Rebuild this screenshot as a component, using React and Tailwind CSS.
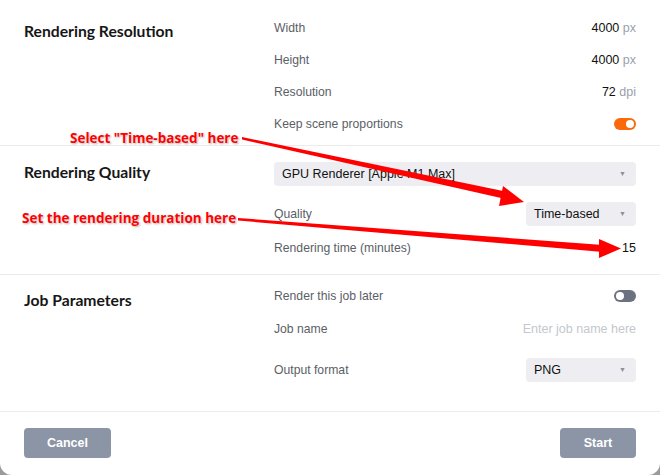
import React from 'react';

const Row = ({ label, children, className = 'h-8' }) => (
  <div className={`flex items-center justify-between ${className}`}>
    <span className="text-[12.2px] text-[#5b5e66]">{label}</span>
    {children}
  </div>
);

const Value = ({ n, unit }) => (
  <span className="text-[12.5px]">
    <span className="font-medium text-[#111]">{n}</span>
    {unit && <span className="text-[#9aa0aa]"> {unit}</span>}
  </span>
);

const Select = ({ value, className = '' }) => (
  <div className={`flex items-center justify-between h-6 rounded-[4px] bg-[#eeeef2] pl-2 pr-2.5 ${className}`}>
    <span className="text-[12.5px] text-[#111]">{value}</span>
    <span className="text-[7px] text-[#8a8f99]">▼</span>
  </div>
);

const Toggle = ({ on }) => (
  <div
    className={`w-[22px] h-[12px] rounded-full flex items-center px-[2px] ${
      on ? 'bg-[#fa6a0a] justify-end' : 'bg-[#6c7280] justify-start'
    }`}
  >
    <div className="w-[8px] h-[8px] rounded-full bg-white" />
  </div>
);

const Heading = ({ children, className = '' }) => (
  <h2 className={`w-[274px] shrink-0 pl-6 font-['Lato'] font-bold text-[15.7px] text-[#161616] leading-5 ${className}`}>
    {children}
  </h2>
);

const Note = ({ children, className }) => (
  <div
    className={`absolute font-['Open_Sans'] font-bold text-[13.5px] leading-5 text-[#f00] [text-shadow:0_0_2px_#fff,1px_1px_2px_rgba(0,0,0,0.35)] ${className}`}
  >
    {children}
  </div>
);

export default function App() {
  return (
    <div className="w-[660px] h-[475px] bg-[#9b9b9b] font-['Liberation_Sans',Arial,sans-serif]">
      <div className="relative w-full h-full bg-white rounded-b-[12px] flex flex-col">
        {/* Rendering Resolution */}
        <section className="flex border-b border-[#ececee] pt-[12px] pb-[5px]">
          <Heading className="pt-[9px]">Rendering Resolution</Heading>
          <div className="w-[362px]">
            <Row label="Width"><Value n="4000" unit="px" /></Row>
            <Row label="Height"><Value n="4000" unit="px" /></Row>
            <Row label="Resolution"><Value n="72" unit="dpi" /></Row>
            <Row label="Keep scene proportions"><Toggle on /></Row>
          </div>
        </section>

        {/* Rendering Quality */}
        <section className="flex border-b border-[#ececee] pt-4 pb-[14px]">
          <Heading>Rendering Quality</Heading>
          <div className="w-[362px]">
            <Select value="GPU Renderer [Apple M1 Max]" />
            <Row label="Quality" className="h-6 mt-4">
              <Select value="Time-based" className="w-[110px]" />
            </Row>
            <Row label="Rendering time (minutes)" className="h-6 mt-[10px]">
              <Value n="15" />
            </Row>
          </div>
        </section>

        {/* Job Parameters */}
        <section className="flex border-b border-[#ececee] pt-[5px] flex-1">
          <Heading className="pt-[10px]">Job Parameters</Heading>
          <div className="w-[362px]">
            <Row label="Render this job later"><Toggle /></Row>
            <Row label="Job name" className="h-[34px]">
              <span className="text-[12.5px] text-[#c4c7cd]">Enter job name here</span>
            </Row>
            <Row label="Output format" className="h-6 mt-[12px]">
              <Select value="PNG" className="w-[110px]" />
            </Row>
          </div>
        </section>

        {/* Footer */}
        <footer className="flex justify-between px-6 pt-4 pb-[17px]">
          <button className="w-[87px] h-[30px] rounded-[4px] bg-[#8c95a6] text-white font-bold text-[12.5px]">
            Cancel
          </button>
          <button className="w-[76px] h-[30px] rounded-[4px] bg-[#8c95a6] text-white font-bold text-[12.5px]">
            Start
          </button>
        </footer>

        {/* annotations */}
        <Note className="left-[70px] top-[128px]">Select "Time-based" here</Note>
        <Note className="left-[22px] top-[208px]">Set the rendering duration here</Note>
        <svg className="absolute left-0 top-0 pointer-events-none" width="660" height="475">
          <polygon points="242,137 242,139.5 510,200 508,192" fill="#f00" />
          <polygon points="503,186 524,202 499,206" fill="#f00" />
          <polygon points="238,218 238,220.5 603,252 603,245" fill="#f00" />
          <polygon points="599,239 621,248.5 599,258" fill="#f00" />
        </svg>
      </div>
    </div>
  );
}
